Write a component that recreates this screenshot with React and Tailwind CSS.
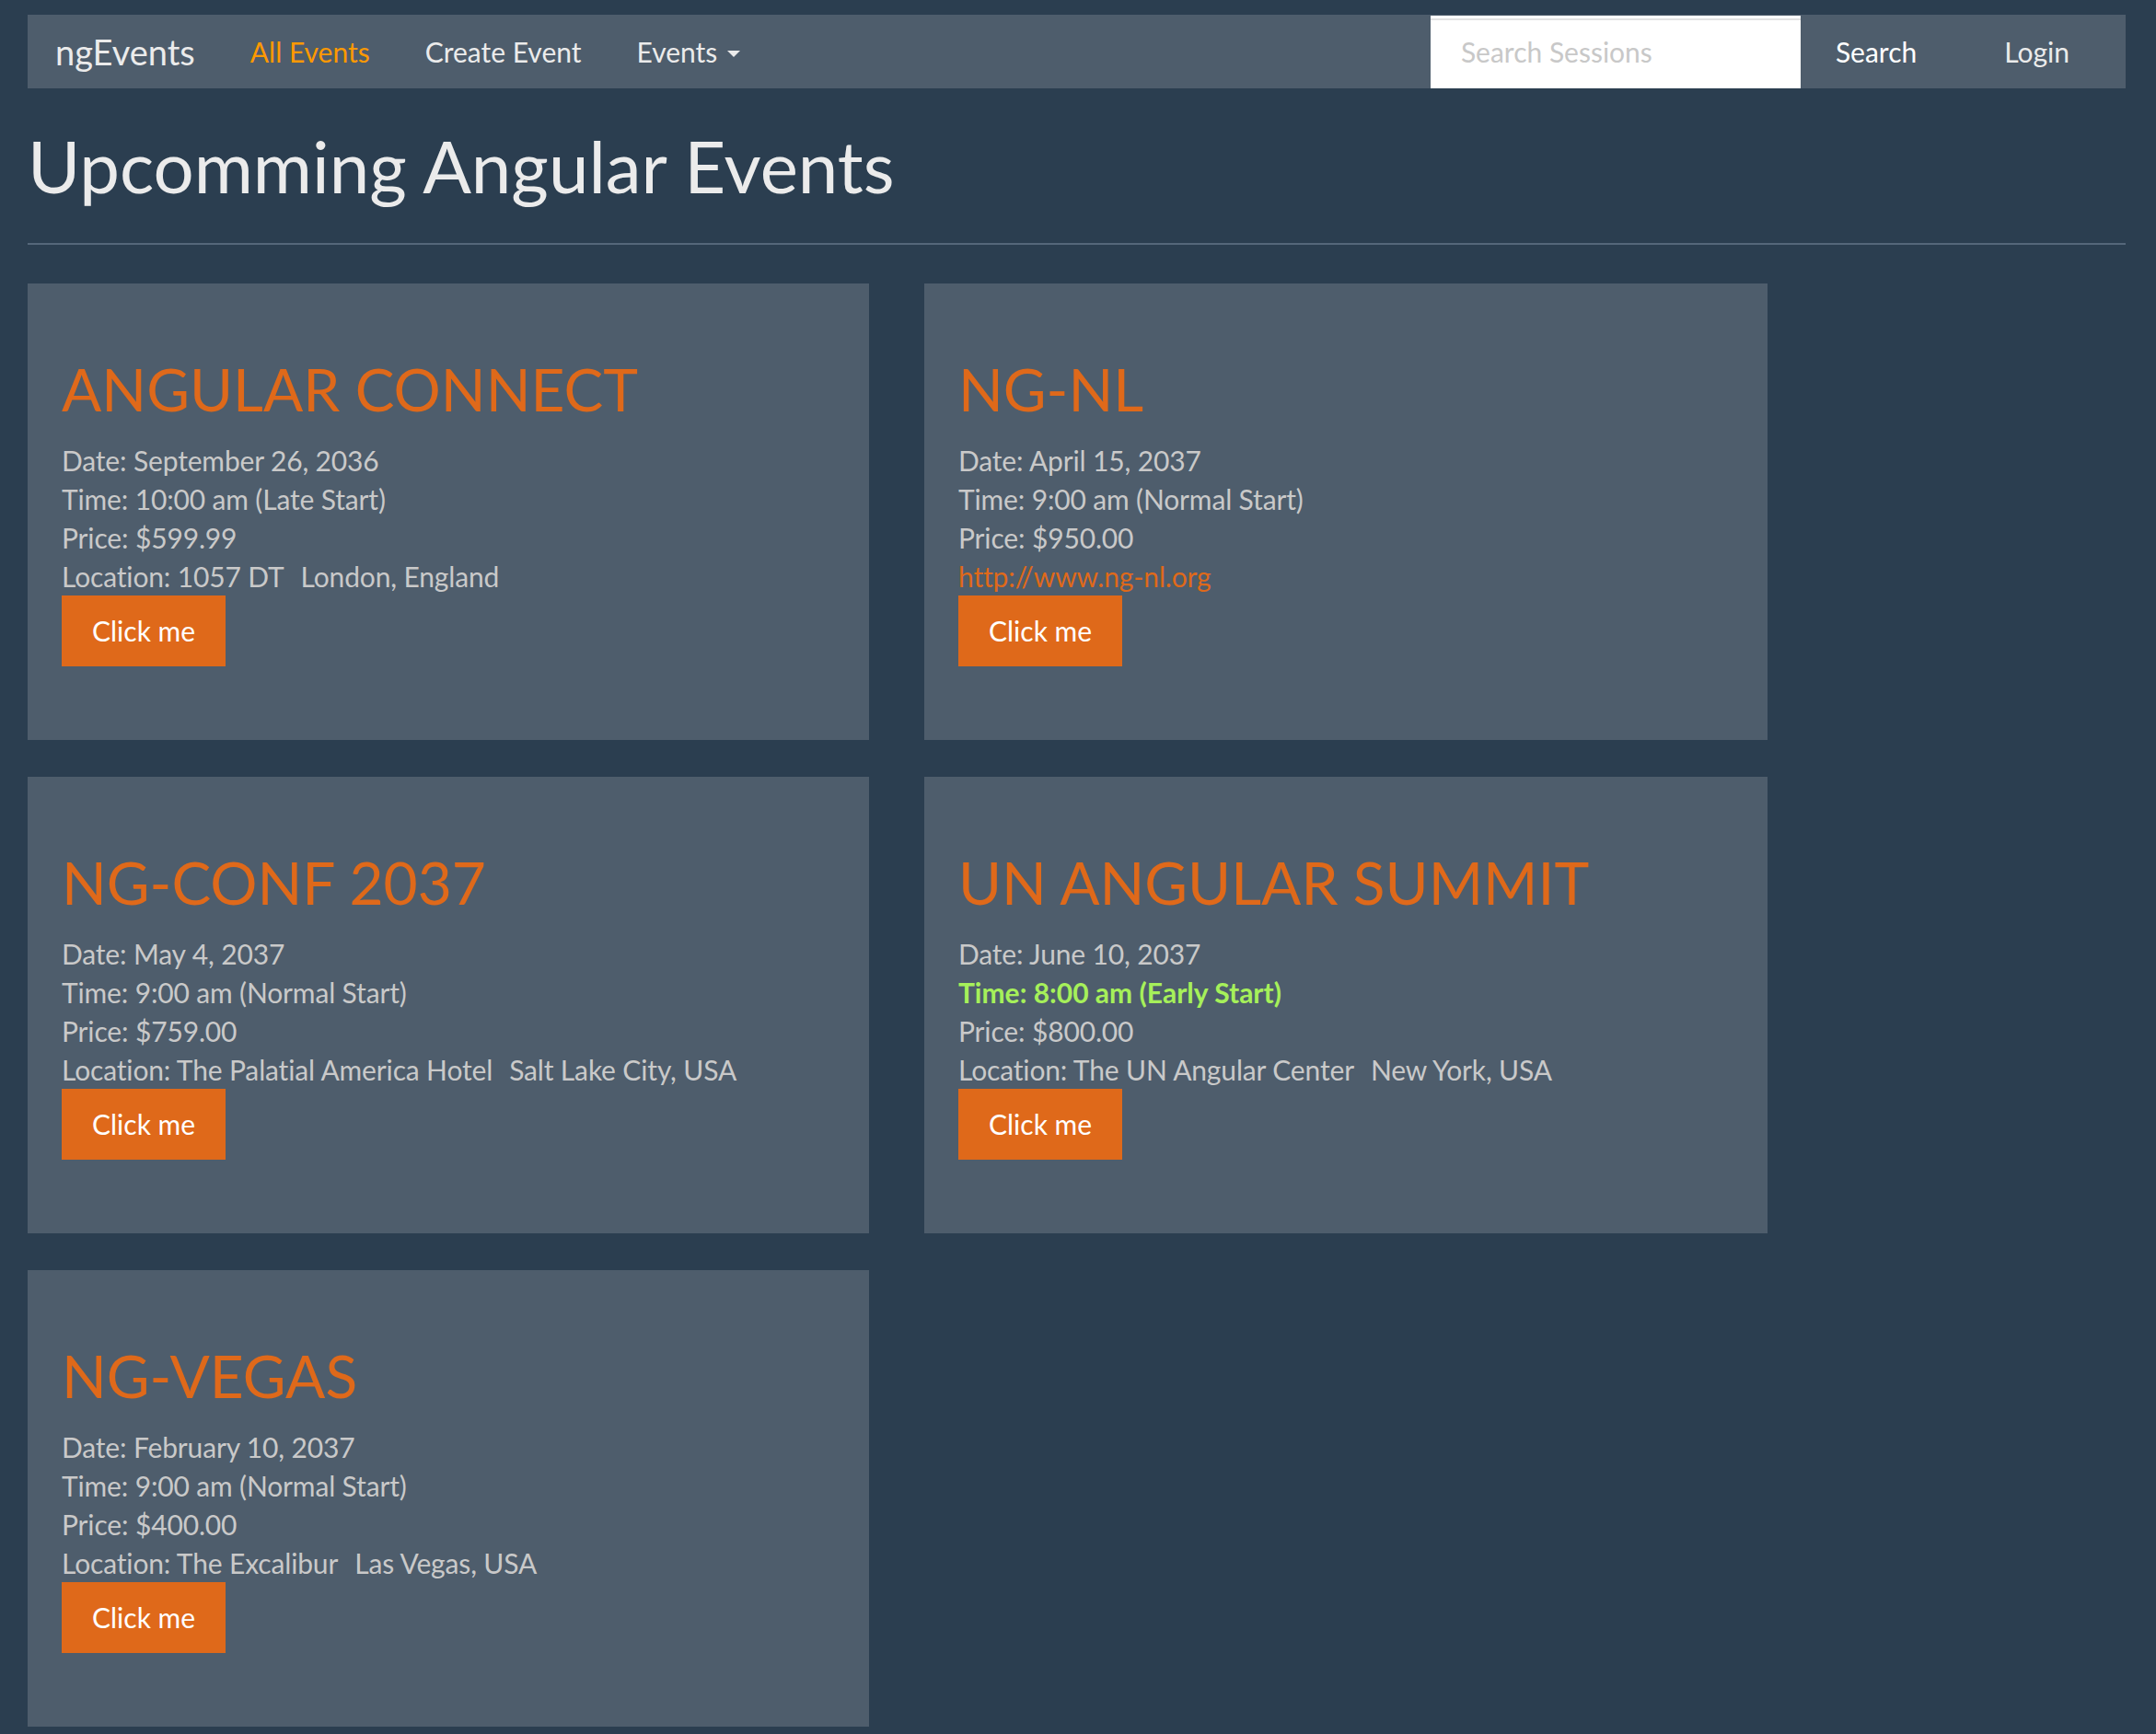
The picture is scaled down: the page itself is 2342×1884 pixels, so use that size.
import React from 'react';

/* ─── Données ─────────────────────────────────────────── */
const EVENTS = [
  {
    name: 'Angular Connect',
    date: 'September 26, 2036',
    time: '10:00 am',
    start: 'Late Start',
    price: '$599.99',
    location: { address: '1057 DT', city: 'London', country: 'England' },
  },
  {
    name: 'ng-nl',
    date: 'April 15, 2037',
    time: '9:00 am',
    start: 'Normal Start',
    price: '$950.00',
    url: 'http://www.ng-nl.org',
  },
  {
    name: 'ng-conf 2037',
    date: 'May 4, 2037',
    time: '9:00 am',
    start: 'Normal Start',
    price: '$759.00',
    location: { address: 'The Palatial America Hotel', city: 'Salt Lake City', country: 'USA' },
  },
  {
    name: 'UN Angular Summit',
    date: 'June 10, 2037',
    time: '8:00 am',
    start: 'Early Start',
    early: true,
    price: '$800.00',
    location: { address: 'The UN Angular Center', city: 'New York', country: 'USA' },
  },
  {
    name: 'ng-vegas',
    date: 'February 10, 2037',
    time: '9:00 am',
    start: 'Normal Start',
    price: '$400.00',
    location: { address: 'The Excalibur', city: 'Las Vegas', country: 'USA' },
  },
];

/* ─── Barre de navigation ─────────────────────────────── */
const NavBar = () => (
  <nav className="ml-[30px] flex h-[80px] w-[2279px] items-stretch bg-[#4E5D6C] text-[#EBEBEB]">
    <a className="flex items-center px-[30px] text-[38px]">ngEvents</a>
    <a className="flex items-center px-[30px] text-[30px] text-[#FF9900]">All Events</a>
    <a className="flex items-center px-[30px] text-[30px]">Create Event</a>
    <a className="flex items-center px-[30px] text-[30px]">
      Events
      <span className="ml-[11px] mt-[4px] h-0 w-0 border-x-[7px] border-t-[7px] border-x-transparent border-t-[#EBEBEB]" />
    </a>

    <div className="ml-auto flex items-stretch">
      <input
        type="text"
        placeholder="Search Sessions"
        className="mt-px w-[402px] bg-white pl-[33px] text-[30px] text-[#333] shadow-[inset_0_3px_0_#fff,inset_0_5px_0_#e2e2e2] outline-none placeholder:text-[#c8c8c8]"
      />
      <button className="flex items-center px-[38px] text-[30px] text-white">Search</button>
      <a className="ml-[57px] mr-[61px] flex items-center text-[30px]">Login</a>
    </div>
  </nav>
);

/* ─── Carte d'événement ───────────────────────────────── */
const EventCard = ({ ev }) => (
  <div className="h-[496px] bg-[#4E5D6C] pl-[37px] pt-[38px]">
    <h2 className="mb-[21px] mt-[42px] text-[64px] uppercase leading-[1.1] text-[#DF691A]">{ev.name}</h2>
    <div className="text-[30px] leading-[42px] tracking-[-0.15px] text-[#C9C9C9]">
      <div>Date: {ev.date}</div>
      <div className={ev.early ? 'font-bold tracking-normal text-[#A6F05A]' : ''}>
        Time: {ev.time} ({ev.start})
      </div>
      <div>Price: {ev.price}</div>
      {ev.location ? (
        <div>
          Location: {ev.location.address}
          <span className="ml-[18px]">
            {ev.location.city}, {ev.location.country}
          </span>
        </div>
      ) : (
        <div>
          <a className="text-[#DF691A]">{ev.url}</a>
        </div>
      )}
    </div>
    <button className="flex h-[77px] items-center bg-[#DF691A] px-[33px] text-[30px] text-white">Click me</button>
  </div>
);

/* ─── Page ────────────────────────────────────────────── */
export default function App() {
  return (
    <div className="min-h-[1884px] bg-[#2B3E50] pt-[16px] font-[Lato,sans-serif]">
      <NavBar />

      <div className="ml-[30px] w-[2279px]">
        <h1 className="mt-[42px] text-[78px] leading-[1.1] text-[#EBEBEB]">Upcomming Angular Events</h1>
        <hr className="mb-[42px] mt-[40px] h-[2px] border-0 bg-[#55677A]" />

        <div className="grid grid-cols-[914px_916px] gap-x-[60px] gap-y-[40px]">
          {EVENTS.map((ev) => (
            <EventCard key={ev.name} ev={ev} />
          ))}
        </div>
      </div>
    </div>
  );
}
